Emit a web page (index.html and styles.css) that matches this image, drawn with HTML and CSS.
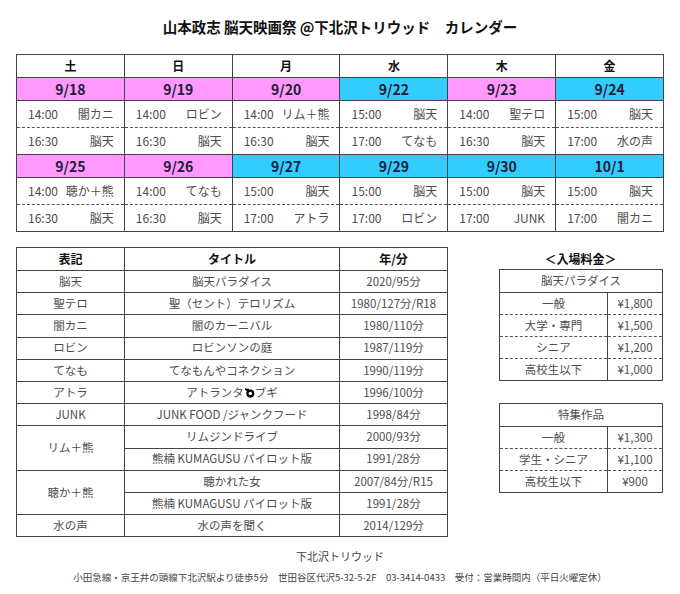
FILE: index.html
```html
<!DOCTYPE html>
<html lang="ja">
<head>
<meta charset="utf-8">
<title>山本政志 脳天映画祭 カレンダー</title>
<link rel="stylesheet" href="styles.css">
</head>
<body>
<div class="page">
  <h1 class="title">山本政志 脳天映画祭 @下北沢トリウッド　カレンダー</h1>

  <table class="cal">
    <tr class="day"><td>土</td><td>日</td><td>月</td><td>水</td><td>木</td><td>金</td></tr>
    <tr class="date"><td class="pink">9/18</td><td class="pink">9/19</td><td class="pink">9/20</td><td class="blue">9/22</td><td class="pink">9/23</td><td class="blue">9/24</td></tr>
    <tr class="slot first">
      <td><div class="s"><span>14:00</span><span>闇カニ</span></div></td>
      <td><div class="s"><span>14:00</span><span>ロビン</span></div></td>
      <td><div class="s"><span>14:00</span><span>リム＋熊</span></div></td>
      <td><div class="s"><span>15:00</span><span>脳天</span></div></td>
      <td><div class="s"><span>14:00</span><span>聖テロ</span></div></td>
      <td><div class="s"><span>15:00</span><span>脳天</span></div></td>
    </tr>
    <tr class="slot second">
      <td><div class="s"><span>16:30</span><span>脳天</span></div></td>
      <td><div class="s"><span>16:30</span><span>脳天</span></div></td>
      <td><div class="s"><span>16:30</span><span>脳天</span></div></td>
      <td><div class="s"><span>17:00</span><span>てなも</span></div></td>
      <td><div class="s"><span>16:30</span><span>脳天</span></div></td>
      <td><div class="s"><span>17:00</span><span>水の声</span></div></td>
    </tr>
    <tr class="date"><td class="pink">9/25</td><td class="pink">9/26</td><td class="blue">9/27</td><td class="blue">9/29</td><td class="blue">9/30</td><td class="blue">10/1</td></tr>
    <tr class="slot first">
      <td><div class="s"><span>14:00</span><span>聴か＋熊</span></div></td>
      <td><div class="s"><span>14:00</span><span>てなも</span></div></td>
      <td><div class="s"><span>15:00</span><span>脳天</span></div></td>
      <td><div class="s"><span>15:00</span><span>脳天</span></div></td>
      <td><div class="s"><span>15:00</span><span>脳天</span></div></td>
      <td><div class="s"><span>15:00</span><span>脳天</span></div></td>
    </tr>
    <tr class="slot second">
      <td><div class="s"><span>16:30</span><span>脳天</span></div></td>
      <td><div class="s"><span>16:30</span><span>脳天</span></div></td>
      <td><div class="s"><span>17:00</span><span>アトラ</span></div></td>
      <td><div class="s"><span>17:00</span><span>ロビン</span></div></td>
      <td><div class="s"><span>17:00</span><span>JUNK</span></div></td>
      <td><div class="s"><span>17:00</span><span>闇カニ</span></div></td>
    </tr>
  </table>

  <div class="lower">
    <table class="films">
      <colgroup><col class="c1"><col class="c2"><col class="c3"></colgroup>
      <tr><th>表記</th><th>タイトル</th><th>年/分</th></tr>
      <tr><td>脳天</td><td>脳天パラダイス</td><td>2020/95分</td></tr>
      <tr><td>聖テロ</td><td>聖（セント）テロリズム</td><td>1980/127分/R18</td></tr>
      <tr><td>闇カニ</td><td>闇のカーニバル</td><td>1980/110分</td></tr>
      <tr><td>ロビン</td><td>ロビンソンの庭</td><td>1987/119分</td></tr>
      <tr><td>てなも</td><td>てなもんやコネクション</td><td>1990/119分</td></tr>
      <tr><td>アトラ</td><td>アトランタ<svg class="swirl" viewBox="0 0 10 10" width="10" height="10"><circle cx="5.3" cy="5.6" r="2.9" fill="none" stroke="#000" stroke-width="2.3"/><path d="M3 3.4 L1.2 1.4 L4 1.8" fill="none" stroke="#000" stroke-width="1.8"/></svg>ブギ</td><td>1996/100分</td></tr>
      <tr><td>JUNK</td><td>JUNK FOOD /ジャンクフード</td><td>1998/84分</td></tr>
      <tr><td rowspan="2">リム＋熊</td><td>リムジンドライブ</td><td>2000/93分</td></tr>
      <tr><td>熊楠 KUMAGUSU パイロット版</td><td>1991/28分</td></tr>
      <tr><td rowspan="2">聴か＋熊</td><td>聴かれた女</td><td>2007/84分/R15</td></tr>
      <tr><td>熊楠 KUMAGUSU パイロット版</td><td>1991/28分</td></tr>
      <tr><td>水の声</td><td>水の声を聞く</td><td>2014/129分</td></tr>
    </table>

    <div class="prices">
      <div class="prices-title">＜入場料金＞</div>
      <table class="price">
        <colgroup><col class="p1"><col class="p2"></colgroup>
        <tr class="ph"><td colspan="2">脳天パラダイス</td></tr>
        <tr class="r top"><td>一般</td><td>¥1,800</td></tr>
        <tr class="r mid"><td>大学・専門</td><td>¥1,500</td></tr>
        <tr class="r mid"><td>シニア</td><td>¥1,200</td></tr>
        <tr class="r bot"><td>高校生以下</td><td>¥1,000</td></tr>
      </table>
      <table class="price second-price">
        <colgroup><col class="p1"><col class="p2"></colgroup>
        <tr class="ph"><td colspan="2">特集作品</td></tr>
        <tr class="r top"><td>一般</td><td>¥1,300</td></tr>
        <tr class="r mid"><td>学生・シニア</td><td>¥1,100</td></tr>
        <tr class="r bot"><td>高校生以下</td><td>¥900</td></tr>
      </table>
    </div>
  </div>

  <div class="footer">
    <p class="f1">下北沢トリウッド</p>
    <p class="f2">小田急線・京王井の頭線下北沢駅より徒歩5分　世田谷区代沢5-32-5-2F　03-3414-0433　受付：営業時間内（平日火曜定休）</p>
  </div>
</div>
</body>
</html>
```

FILE: styles.css
```css
* { box-sizing: border-box; }

body {
  margin: 0;
  width: 680px;
  background: #fff;
  color: #4d4d4d;
  font-family: "Noto Sans CJK JP", "Noto Sans", sans-serif;
}

.page {
  padding: 0 16px;
}

.title {
  margin: 0;
  height: 54px;
  line-height: 54px;
  text-align: center;
  font-size: 14.5px;
  font-weight: bold;
  color: #111;
}

/* Calendar */
.cal {
  width: 648px;
  border-collapse: collapse;
  table-layout: fixed;
}

.cal td {
  border: 1px solid #444;
  padding: 0;
  font-size: 12px;
  line-height: 1;
}

.cal .day td {
  height: 23px;
  text-align: center;
  font-weight: bold;
  font-size: 12px;
  color: #111;
}

.cal .date td {
  height: 23px;
  text-align: center;
  font-weight: bold;
  font-size: 14px;
  color: #1d1d35;
}

.pink { background: #ff99ff; }
.blue { background: #33ccff; }

.cal .slot td { height: 27px; }
.cal .slot.first td { border-bottom: 1px dashed #555; }
.cal .slot.second td { border-top: 1px dashed #555; }

.s {
  display: flex;
  justify-content: space-between;
  align-items: center;
  padding: 0 10px 0 11px;
}

/* Lower area */
.lower {
  display: flex;
  justify-content: space-between;
  align-items: flex-start;
  margin-top: 15px;
  padding-right: 2px;
}

.films {
  width: 431px;
  border-collapse: collapse;
  table-layout: fixed;
}

.films .c1 { width: 108px; }
.films .c2 { width: 215px; }
.films .c3 { width: 108px; }

.films th,
.films td {
  border: 1px solid #444;
  padding: 0;
  height: 22.2px;
  text-align: center;
  font-size: 11.5px;
  line-height: 1;
  white-space: nowrap;
}

.films th {
  height: 23px;
  font-weight: bold;
  font-size: 12px;
  color: #111;
}

.swirl {
  vertical-align: -1px;
  margin: 0 0 0 1px;
}

.prices {
  width: 163px;
}

.prices-title {
  height: 22px;
  line-height: 24px;
  text-align: center;
  font-weight: bold;
  font-size: 12px;
  color: #111;
}

.price {
  width: 163px;
  border-collapse: collapse;
  table-layout: fixed;
}

.price .p1 { width: 108px; }
.price .p2 { width: 55px; }

.price td {
  border: 1px solid #444;
  padding: 0;
  height: 22px;
  text-align: center;
  font-size: 11.5px;
  line-height: 1;
  white-space: nowrap;
}

.price .ph td { height: 23px; }
.price .top td { border-bottom: 1px dashed #555; }
.price .mid td { border-top: 1px dashed #555; border-bottom: 1px dashed #555; }
.price .bot td { border-top: 1px dashed #555; }

.second-price {
  margin-top: 22px;
}

/* Footer */
.footer {
  margin-top: 9px;
  text-align: center;
  color: #444;
}

.footer p {
  margin: 0;
  line-height: 21px;
}

.f1 { font-size: 11px; }
.f2 { font-size: 9.5px; }
```
